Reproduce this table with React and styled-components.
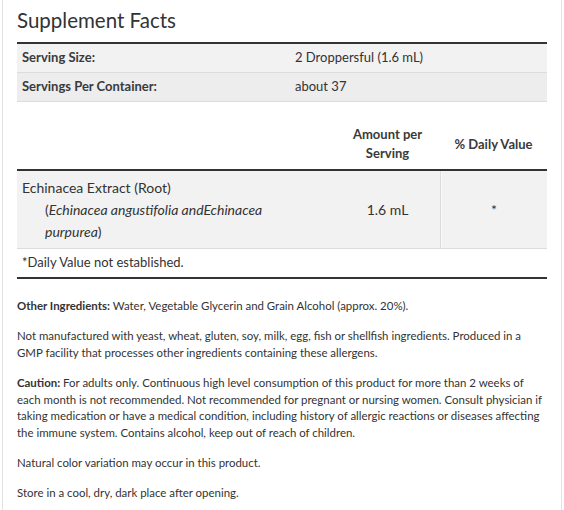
import React from 'react';
import styled, { createGlobalStyle } from 'styled-components';

const GlobalStyle = createGlobalStyle`
  body {
    margin: 0;
    background: #fff;
    font-family: Lato, 'Noto Sans', sans-serif;
    color: #333;
  }
`;

const Frame = styled.div`
  margin: 0 2px;
  border-left: 1px solid #e3e3e3;
  border-right: 1px solid #e3e3e3;
  padding: 8px 14px 20px;
  min-height: 510px;
  box-sizing: border-box;
`;

const Title = styled.h2`
  margin: 0 0 10px;
  font-size: 20.5px;
  line-height: 24px;
  font-weight: 400;
  color: #333;
`;

const InfoTable = styled.div`
  border-top: 2px solid #333;
`;

const InfoRow = styled.div`
  display: grid;
  grid-template-columns: 278px 1fr;
  background: ${(p) => (p.$alt ? '#ededed' : '#f2f2f2')};
  border-bottom: 1px solid #dcdcdc;
  height: 29px;
  box-sizing: border-box;
  padding-bottom: 2px;
  align-items: center;
  font-size: 13px;
`;

const InfoLabel = styled.div`
  padding-left: 5px;
  font-weight: 700;
  color: #3a3a3a;
`;

const InfoValue = styled.div``;

const FactsGrid = styled.div`
  display: grid;
  grid-template-columns: 318px 105px 1fr;
`;

const HeadCell = styled.div`
  height: 69px;
  display: flex;
  align-items: center;
  justify-content: center;
  text-align: center;
  font-size: 13px;
  font-weight: 700;
  color: #3a3a3a;
  line-height: 19px;
  padding-top: 17px;
  box-sizing: border-box;
  border-bottom: 2px solid #333;
`;

const BodyCell = styled.div`
  background: #f2f2f2;
  border-bottom: 1px solid #dcdcdc;
  font-size: 14px;
  line-height: 22px;
  padding: 6px 5px 5px;
  display: flex;
  align-items: ${(p) => (p.$center ? 'center' : 'flex-start')};
  justify-content: ${(p) => (p.$center ? 'center' : 'flex-start')};
  ${(p) => p.$divider && 'border-left: 1px solid #dcdcdc; box-shadow: inset 1px 0 0 #f9f9f9;'}
`;

const NameBlock = styled.div``;

const Species = styled.div`
  padding-left: 23px;
  padding-right: 20px;
`;

const Footnote = styled.div`
  grid-column: 1 / -1;
  font-size: 13px;
  height: 30px;
  box-sizing: border-box;
  padding-bottom: 2px;
  display: flex;
  align-items: center;
  padding-left: 5px;
  border-bottom: 2px solid #333;
`;

const Notes = styled.div`
  padding-top: 19px;
`;

const Note = styled.p`
  margin: 0 0 13.6px;
  font-size: 11.45px;
  line-height: 16.6px;
  color: #333;
`;

const Strong = styled.b`
  font-weight: 700;
`;

export default function App() {
  return (
    <>
      <GlobalStyle />
      <Frame>
        <Title>Supplement Facts</Title>
        <InfoTable>
          <InfoRow>
            <InfoLabel>Serving Size:</InfoLabel>
            <InfoValue>2 Droppersful (1.6 mL)</InfoValue>
          </InfoRow>
          <InfoRow $alt>
            <InfoLabel>Servings Per Container:</InfoLabel>
            <InfoValue>about 37</InfoValue>
          </InfoRow>
        </InfoTable>
        <FactsGrid>
          <HeadCell />
          <HeadCell>
            Amount per
            <br />
            Serving
          </HeadCell>
          <HeadCell>% Daily Value</HeadCell>
          <BodyCell>
            <NameBlock>
              Echinacea Extract (Root)
              <Species>
                (<i>Echinacea angustifolia andEchinacea purpurea</i>)
              </Species>
            </NameBlock>
          </BodyCell>
          <BodyCell $center>1.6 mL</BodyCell>
          <BodyCell $center $divider>*</BodyCell>
          <Footnote>*Daily Value not established.</Footnote>
        </FactsGrid>
        <Notes>
          <Note>
            <Strong>Other Ingredients:</Strong> Water, Vegetable Glycerin and Grain Alcohol (approx. 20%).
          </Note>
          <Note>
            Not manufactured with yeast, wheat, gluten, soy, milk, egg, fish or shellfish ingredients. Produced in a GMP facility that processes other ingredients containing these allergens.
          </Note>
          <Note>
            <Strong>Caution:</Strong> For adults only. Continuous high level consumption of this product for more than 2 weeks of each month is not recommended. Not recommended for pregnant or nursing women. Consult physician if taking medication or have a medical condition, including history of allergic reactions or diseases affecting the immune system. Contains alcohol, keep out of reach of children.
          </Note>
          <Note>Natural color variation may occur in this product.</Note>
          <Note>Store in a cool, dry, dark place after opening.</Note>
        </Notes>
      </Frame>
    </>
  );
}
